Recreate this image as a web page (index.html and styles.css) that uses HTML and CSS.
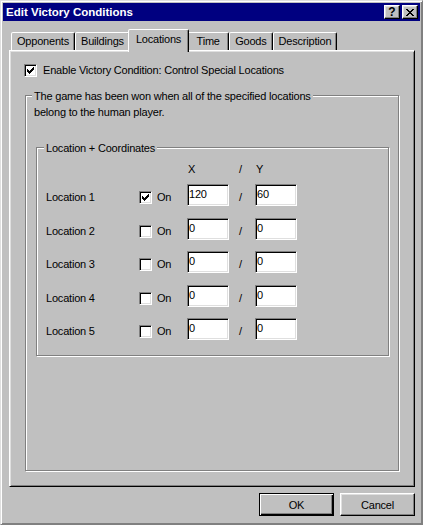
FILE: index.html
```html
<!DOCTYPE html>
<html>
<head>
<meta charset="utf-8">
<title>Edit Victory Conditions</title>
<link rel="stylesheet" href="styles.css">
</head>
<body>
<div class="window">
  <div class="titlebar">
    <span class="title">Edit Victory Conditions</span>
    <div class="caption-buttons">
      <span class="cap-btn help">?</span>
      <span class="cap-btn close"><svg width="8" height="7" viewBox="0 0 8 7" shape-rendering="crispEdges"><path fill="#000" d="M0 0h2v1h-2zM6 0h2v1h-2zM1 1h2v1h-2zM5 1h2v1h-2zM2 2h4v1h-4zM3 3h2v1h-2zM2 4h4v1h-4zM1 5h2v1h-2zM5 5h2v1h-2zM0 6h2v1h-2zM6 6h2v1h-2z"/></svg></span>
    </div>
  </div>
  <div class="content">
    <div class="tabs">
      <span class="tab">Opponents</span>
      <span class="tab">Buildings</span>
      <span class="tab active">Locations</span>
      <span class="tab">Time</span>
      <span class="tab">Goods</span>
      <span class="tab">Description</span>
    </div>
    <div class="pane">
      <div class="check-row">
        <span class="checkbox"><svg width="7" height="7" viewBox="0 0 7 7" shape-rendering="crispEdges"><path fill="#000" d="M6 0h1v1h-1zM5 1h2v1h-2zM0 2h1v1h-1zM4 2h3v1h-3zM0 3h2v1h-2zM3 3h3v1h-3zM0 4h5v1h-5zM1 5h3v1h-3zM2 6h1v1h-1z"/></svg></span>
        <span>Enable Victory Condition: Control Special Locations</span>
      </div>
      <div class="group outer">
        <div class="group-caption">The game has been won when all of the specified locations<br>belong to the human player.</div>
        <div class="group inner">
          <div class="group-caption">Location + Coordinates</div>
          <div class="loc-head">
            <span></span><span></span><span class="coord">X</span><span class="slash">/</span><span class="coord">Y</span>
          </div>
          <div class="loc-rows">
            <div class="loc-row">
              <span class="label">Location 1</span>
              <span class="on"><span class="checkbox"><svg width="7" height="7" viewBox="0 0 7 7" shape-rendering="crispEdges"><path fill="#000" d="M6 0h1v1h-1zM5 1h2v1h-2zM0 2h1v1h-1zM4 2h3v1h-3zM0 3h2v1h-2zM3 3h3v1h-3zM0 4h5v1h-5zM1 5h3v1h-3zM2 6h1v1h-1z"/></svg></span><span>On</span></span>
              <span class="field">120</span>
              <span class="slash">/</span>
              <span class="field">60</span>
            </div>
            <div class="loc-row">
              <span class="label">Location 2</span>
              <span class="on"><span class="checkbox"></span><span>On</span></span>
              <span class="field">0</span>
              <span class="slash">/</span>
              <span class="field">0</span>
            </div>
            <div class="loc-row">
              <span class="label">Location 3</span>
              <span class="on"><span class="checkbox"></span><span>On</span></span>
              <span class="field">0</span>
              <span class="slash">/</span>
              <span class="field">0</span>
            </div>
            <div class="loc-row">
              <span class="label">Location 4</span>
              <span class="on"><span class="checkbox"></span><span>On</span></span>
              <span class="field">0</span>
              <span class="slash">/</span>
              <span class="field">0</span>
            </div>
            <div class="loc-row">
              <span class="label">Location 5</span>
              <span class="on"><span class="checkbox"></span><span>On</span></span>
              <span class="field">0</span>
              <span class="slash">/</span>
              <span class="field">0</span>
            </div>
          </div>
        </div>
      </div>
    </div>
    <div class="buttons">
      <span class="btn default">OK</span>
      <span class="btn">Cancel</span>
    </div>
  </div>
</div>
</body>
</html>
```

FILE: styles.css
```css
html, body {
  margin: 0;
  padding: 0;
  background: #c0c0c0;
}

body {
  font-family: "Liberation Sans", Arial, sans-serif;
  font-size: 11px;
  letter-spacing: -0.2px;
  color: #000;
}

.window {
  width: 423px;
  height: 525px;
  box-sizing: border-box;
  display: flex;
  flex-direction: column;
  background: #c0c0c0;
  border: 1px solid;
  border-color: #dfdfdf #808080 #808080 #dfdfdf;
  box-shadow: inset 1px 1px #fff, inset -1px -1px #808080;
  padding: 2px;
}

/* title bar */
.titlebar {
  flex: none;
  height: 18px;
  background: #000080;
  color: #fff;
  display: flex;
  align-items: center;
  justify-content: space-between;
  padding: 0 2px 0 3px;
}

.title {
  font-weight: bold;
  font-size: 11.5px;
  letter-spacing: 0;
  line-height: 18px;
  white-space: nowrap;
}

.caption-buttons {
  display: flex;
  gap: 2px;
}

.cap-btn {
  width: 16px;
  height: 14px;
  box-sizing: border-box;
  background: #c0c0c0;
  border: 1px solid;
  border-color: #fff #000 #000 #fff;
  box-shadow: inset -1px -1px #808080, inset 1px 1px #dfdfdf;
  display: flex;
  align-items: center;
  justify-content: center;
  color: #000;
}

.help {
  font-weight: bold;
  font-size: 12px;
  line-height: 12px;
  letter-spacing: 0;
}

.cap-btn svg {
  display: block;
}

/* content */
.content {
  flex: 1;
  display: flex;
  flex-direction: column;
  padding: 8px 5px 6px 6px;
  min-height: 0;
}

.tabs {
  flex: none;
  display: flex;
  align-items: flex-end;
  height: 21px;
  padding-left: 2px;
}

.tab {
  box-sizing: border-box;
  height: 18px;
  min-width: 42px;
  padding: 2px 5px 0;
  border: 1px solid;
  border-bottom: none;
  border-color: #fff #000 transparent #fff;
  border-radius: 2px 2px 0 0;
  box-shadow: inset -1px 0 #808080;
  background: #c0c0c0;
  line-height: 13px;
  text-align: center;
  white-space: nowrap;
}

.tab.active {
  position: relative;
  z-index: 2;
  height: 23px;
  margin: 0 -2px -2px;
  padding: 3px 7px 0;
}

.pane {
  flex: 1;
  min-height: 0;
  display: flex;
  flex-direction: column;
  border: 1px solid;
  border-color: #fff #000 #000 #fff;
  box-shadow: inset 1px 1px #dfdfdf, inset -1px -1px #808080;
  padding: 13px 15px 15px 14px;
}

.check-row {
  display: flex;
  align-items: center;
  gap: 6px;
  height: 13px;
  line-height: 13px;
  white-space: nowrap;
}

.checkbox {
  flex: none;
  width: 13px;
  height: 13px;
  box-sizing: border-box;
  background: #fff;
  border: 1px solid;
  border-color: #808080 #fff #fff #808080;
  box-shadow: inset 1px 1px #000, inset -1px -1px #dfdfdf;
  display: flex;
  align-items: center;
  justify-content: center;
}

.checkbox svg {
  display: block;
}

/* group boxes */
.group {
  border: 1px solid #808080;
  box-shadow: inset 1px 1px #fff, 1px 1px #fff;
}

.group.outer {
  flex: 1;
  margin: 18px 0 0 1px;
}

.group.inner {
  margin: 27px 9px 0 10px;
  padding-bottom: 15px;
}

.group-caption {
  width: fit-content;
  margin: -8px 0 0 6px;
  padding: 0 2px;
  background: #c0c0c0;
  line-height: 16px;
  white-space: nowrap;
}

.inner > .group-caption {
  margin-left: 7px;
}

.loc-head,
.loc-row {
  display: grid;
  grid-template-columns: 93px 48px 42px 26px 42px;
  margin-left: 9px;
}

.loc-head {
  margin-top: 7px;
  margin-bottom: 8px;
  line-height: 13px;
}

.coord {
  padding-left: 1px;
}

.slash {
  padding-left: 10px;
}

.loc-rows {
  display: flex;
  flex-direction: column;
  gap: 11.5px;
}

.loc-row {
  height: 22px;
}

.loc-row .label,
.loc-row .slash {
  padding-top: 7px;
  line-height: 13px;
  white-space: nowrap;
}

.on {
  display: flex;
  align-items: center;
  gap: 5px;
  height: 13px;
  margin-top: 7px;
  line-height: 13px;
}

.field {
  box-sizing: border-box;
  height: 22px;
  background: #fff;
  border: 1px solid;
  border-color: #808080 #fff #fff #808080;
  box-shadow: inset 1px 1px #000, inset -1px -1px #dfdfdf;
  padding: 3px 1px 0 1px;
  line-height: 13px;
}

/* buttons */
.buttons {
  flex: none;
  display: flex;
  justify-content: flex-end;
  gap: 6px;
  margin-top: 6px;
}

.btn {
  width: 75px;
  height: 23px;
  box-sizing: border-box;
  display: flex;
  align-items: center;
  justify-content: center;
  border: 1px solid;
  border-color: #fff #000 #000 #fff;
  box-shadow: inset -1px -1px #808080, inset 1px 1px #dfdfdf;
}

.btn.default {
  border-color: #000;
  box-shadow: inset 1px 1px #fff, inset -1px -1px #000, inset -2px -2px #808080;
}
```
